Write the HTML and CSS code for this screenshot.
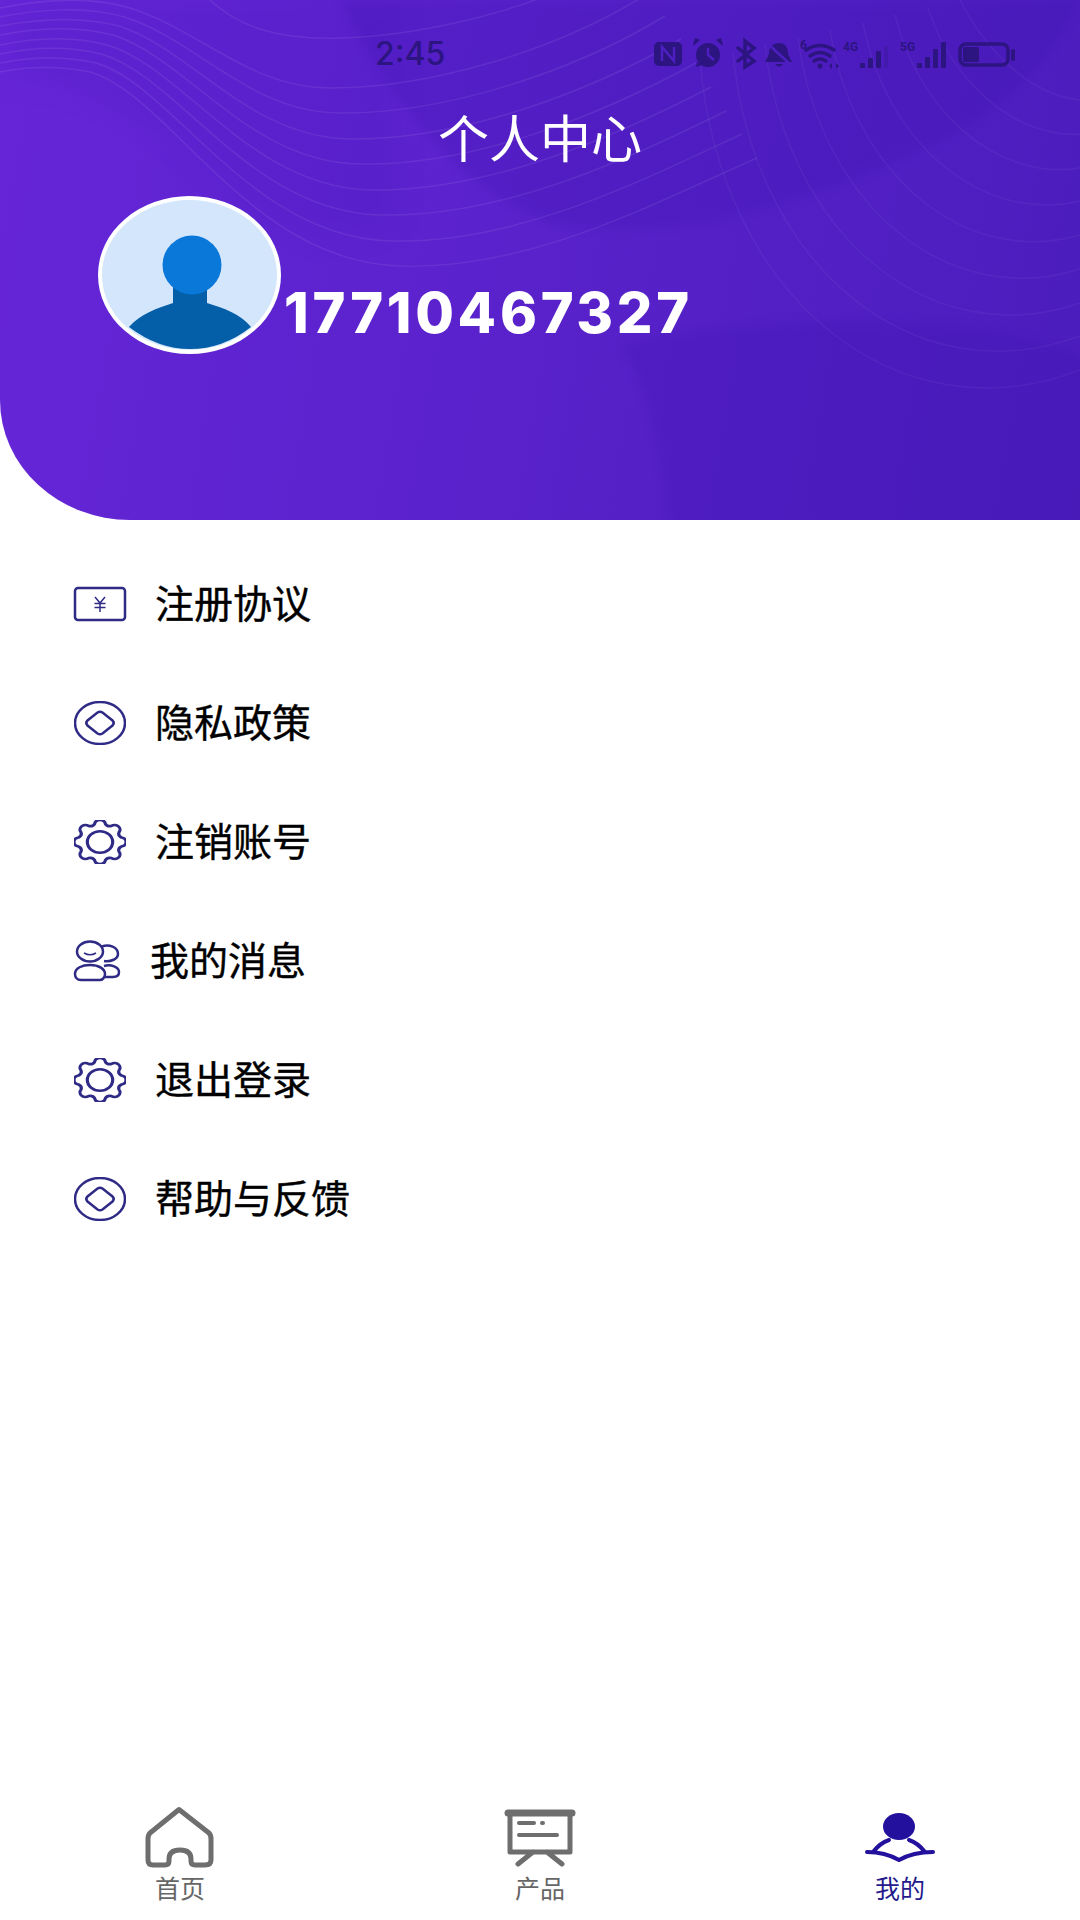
FILE: index.html
```html
<!DOCTYPE html>
<html lang="zh-CN">
<head>
    <meta charset="UTF-8">
    <meta name="viewport" content="width=device-width, initial-scale=1.0">
    <title>个人中心</title>
    <link rel="stylesheet" href="styles.css">
</head>
<body>

<svg class="defs" width="0" height="0" aria-hidden="true">
    <symbol id="icon-gear" viewBox="1.500 1.500 41 41" preserveAspectRatio="none">
        <path d="M17.770 5.020A4.300 4.300 0 0 1 26.230 5.020A4 4 0 0 0 31.010 7A4.300 4.300 0 0 1 37 12.990A4 4 0 0 0 38.980 17.770A4.300 4.300 0 0 1 38.980 26.230A4 4 0 0 0 37 31.010A4.300 4.300 0 0 1 31.010 37A4 4 0 0 0 26.230 38.980A4.300 4.300 0 0 1 17.770 38.980A4 4 0 0 0 12.990 37A4.300 4.300 0 0 1 7 31.010A4 4 0 0 0 5.020 26.230A4.300 4.300 0 0 1 5.020 17.770A4 4 0 0 0 7 12.990A4.300 4.300 0 0 1 12.990 7A4 4 0 0 0 17.770 5.020Z"/>
        <circle cx="22" cy="22" r="10"/>
    </symbol>
    <symbol id="icon-coin" viewBox="0 0 52 44">
        <ellipse cx="26" cy="22" rx="25" ry="21"/>
        <path d="M23.500 11.500Q26 10 28.500 11.500L38.500 19.500Q41 22 38.500 24.500L28.500 32.500Q26 34 23.500 32.500L13.500 24.500Q11 22 13.500 19.500Z"/>
    </symbol>
</svg>

<div class="page">
    <header class="profile-head">
        <svg class="head-bg" viewBox="0 0 1080 520" preserveAspectRatio="none" aria-hidden="true">
            <path class="shade shade-soft" d="M0 0V75C90 85 170 120 250 210C320 250 360 240 400 220V0Z"/>
            <path class="shade" d="M340 0C380 80 450 190 560 225C680 245 830 200 960 130C1030 90 1060 40 1080 0Z"/>
            <path class="shade" d="M668 530C665 440 640 370 620 345C720 320 960 300 1090 360V530Z"/>
            <g class="contour">
                <path d="M210 0C240 28 280 40 340 38C420 36 510 12 560 -10"/>
                <path d="M0 8C40 0 90 -4 130 8C200 30 250 88 330 88C430 88 560 50 650 -8"/>
                <path d="M0 17C39 9 86 6 124 17C196 39 250 113 340 113C444 114 573 72 665 16"/>
                <path d="M0 26C37 19 81 16 119 26C191 49 250 138 350 139C459 140 586 94 681 39"/>
                <path d="M0 35C36 28 77 26 113 35C187 58 250 163 360 164C473 166 599 116 696 63"/>
                <path d="M0 45C34 38 73 36 107 45C183 67 250 187 370 190C487 192 611 139 711 87"/>
                <path d="M0 54C33 47 69 46 101 54C179 76 250 212 380 215C501 218 624 161 726 111"/>
                <path d="M0 63C31 57 64 56 96 63C174 86 250 237 390 241C516 244 637 183 742 134"/>
                <path d="M0 72C30 66 60 66 90 72C170 95 250 262 400 266C530 270 650 205 757 158"/>
            </g>
            <g class="contour contour-faint">
                <path d="M960 0C985 50 1030 95 1080 100"/>
                <path d="M928 8C952 81 1014 138 1080 134"/>
                <path d="M895 15C919 113 998 181 1080 168"/>
                <path d="M863 23C886 144 983 224 1080 201"/>
                <path d="M830 30C853 175 965 268 1080 235"/>
                <path d="M798 38C820 206 949 311 1080 269"/>
                <path d="M765 45C787 238 933 354 1080 303"/>
                <path d="M733 53C754 269 916 397 1080 336"/>
                <path d="M700 60C720 300 900 440 1080 370"/>
            </g>
        </svg>

        <div class="status-bar">
            <span class="status-time">2:45</span>
            <svg class="status-icons" width="362" height="36" viewBox="0 0 362 36" aria-hidden="true">
                <!-- nfc -->
                <rect x="0" y="6" width="28" height="24" rx="5"/>
                <path class="cut" d="M8 25V11L20 25V11"/>
                <!-- alarm -->
                <circle cx="54" cy="19" r="12"/>
                <path d="M39 10L46 4L41 2ZM69 10L62 4L67 2ZM43 26L42 31L48 29Z"/>
                <path class="cut" d="M54 12V19L60 24"/>
                <!-- bluetooth -->
                <path class="line" d="M84 12L100 25L91 31V5L100 12L84 25"/>
                <!-- bell -->
                <path d="M125 7C132 7 134 12 134 18L138 26H111L115 18C115 12 118 7 125 7ZM121 28H129Q125 33 121 28Z"/>
                <path class="cut" d="M112 6L139 31"/>
                <!-- wifi -->
                <path class="line" d="M152 14Q166 5 180 14M156 20Q166 13 176 20M160 25Q166 21 172 25"/>
                <circle cx="166" cy="30" r="2.500"/>
                <text class="net" x="146" y="13">6</text>
                <path d="M175 30L178 27V33ZM182 27L185 30L182 33Z"/>
                <!-- 4g -->
                <text class="net" x="189" y="15">4G</text>
                <rect x="206" y="27" width="5" height="5" rx="1"/>
                <rect x="214" y="22" width="5" height="10" rx="1"/>
                <rect x="222" y="15" width="5" height="17" rx="1"/>
                <rect class="dim" x="230" y="10" width="4" height="22" rx="1"/>
                <!-- 5g -->
                <text class="net" x="246" y="15">5G</text>
                <rect x="263" y="27" width="5" height="5" rx="1"/>
                <rect x="271" y="21" width="5" height="11" rx="1"/>
                <rect x="279" y="13" width="5" height="19" rx="1"/>
                <rect x="287" y="6" width="5" height="26" rx="1"/>
                <!-- battery -->
                <rect class="line" x="306" y="8" width="48" height="21" rx="6"/>
                <rect x="309" y="11" width="16" height="15" rx="2"/>
                <rect x="357" y="13" width="4" height="12" rx="2"/>
            </svg>
        </div>

        <h1 class="head-title">个人中心</h1>

        <div class="user-row">
            <div class="avatar">
                <svg width="175" height="150" viewBox="4 4 175 150" aria-hidden="true">
                    <path class="avatar-body" d="M31 131C42 118 60 112 75 107V80H109V107C125 112 143 118 153 131Q125 153 92 153Q60 153 31 131Z"/>
                    <circle class="avatar-face" cx="94" cy="69" r="29.500"/>
                </svg>
            </div>
            <span class="user-phone">17710467327</span>
        </div>
    </header>

    <ul class="menu">
        <li class="menu-item">
            <svg class="menu-icon" viewBox="0 0 52 34" height="34" aria-hidden="true">
                <rect x="1" y="1" width="50" height="32" rx="3"/>
                <path class="thin" d="M21 10L26 16L31 10M26 16V25M20.500 16.500H31.500M20.500 20.500H31.500"/>
            </svg>
            <span>注册协议</span>
        </li>
        <li class="menu-item">
            <svg class="menu-icon" viewBox="0 0 52 44" height="44" aria-hidden="true"><use href="#icon-coin"/></svg>
            <span>隐私政策</span>
        </li>
        <li class="menu-item">
            <svg class="menu-icon" height="44" aria-hidden="true"><use href="#icon-gear" width="52" height="44"/></svg>
            <span>注销账号</span>
        </li>
        <li class="menu-item menu-item-tight">
            <svg class="menu-icon menu-icon-users" viewBox="0 0 46 40" height="40" aria-hidden="true">
                <ellipse cx="16" cy="10.500" rx="13" ry="10"/>
                <path d="M28 5.500C35 3 44 6 44 13C44 18 37 21 30 20"/>
                <path class="thin" d="M10 12Q16 15.500 22 12"/>
                <path d="M1 33C1 27 8 24 16 24C25 24 31 28 31 33C31 37 28 39 26 39H7C3 39 1 36 1 33Z"/>
                <path d="M30 25C37 23 45 26 45 31C45 34 43 36 39 36H31"/>
            </svg>
            <span>我的消息</span>
        </li>
        <li class="menu-item">
            <svg class="menu-icon" height="44" aria-hidden="true"><use href="#icon-gear" width="52" height="44"/></svg>
            <span>退出登录</span>
        </li>
        <li class="menu-item">
            <svg class="menu-icon" viewBox="0 0 52 44" height="44" aria-hidden="true"><use href="#icon-coin"/></svg>
            <span>帮助与反馈</span>
        </li>
    </ul>

    <nav class="tab-bar">
        <div class="tab">
            <svg class="tab-icon" width="70" height="62" viewBox="0 0 70 62" aria-hidden="true">
                <path class="tab-line" d="M34 3.500L64 27Q66 29 66 33V54Q66 59 60 59H50Q46 59 46 55V53Q46 44 35 44Q24 44 24 53V55Q24 59 20 59H8Q3 59 3 54V33Q3 29 5 27Z"/>
            </svg>
            <span class="tab-label">首页</span>
        </div>
        <div class="tab">
            <svg class="tab-icon" width="70" height="62" viewBox="0 0 70 62" aria-hidden="true">
                <path class="tab-line tab-line-bar" d="M3 7H67"/>
                <path class="tab-line" d="M5 7V46H65V7M28 46L13 58M42 46L57 58"/>
                <path class="tab-line tab-line-thin" d="M14 17H29M37 17H38M14 29H52"/>
            </svg>
            <span class="tab-label">产品</span>
        </div>
        <div class="tab tab-active">
            <svg class="tab-icon" width="70" height="62" viewBox="0 0 70 62" aria-hidden="true">
                <ellipse class="tab-fill" cx="34" cy="20.500" rx="16" ry="13.500"/>
                <path class="tab-line tab-line-thin" d="M24 34Q15 37 8 46M44 34Q53 37 60 46"/>
                <path class="tab-line tab-line-thin" d="M2 46Q20 46 34 54Q48 46 68 46"/>
            </svg>
            <span class="tab-label">我的</span>
        </div>
    </nav>
</div>

</body>
</html>
```

FILE: styles.css
```css
* {
    box-sizing: border-box;
}

body {
    margin: 0;
    background-color: #fff;
    font-family: "Noto Sans CJK SC", "Liberation Sans", sans-serif;
}

.defs {
    position: absolute;
}

.page {
    width: 1080px;
    height: 1920px;
    display: flex;
    flex-direction: column;
    overflow: hidden;
}

/* purple header */
.profile-head {
    position: relative;
    height: 520px;
    flex-shrink: 0;
    background: linear-gradient(100deg, #6626d8 0%, #5a22cc 45%, #4b1dbc 100%);
    border-bottom-left-radius: 130px 120px;
    overflow: hidden;
}

.head-bg {
    position: absolute;
    top: 0;
    left: 0;
    width: 1080px;
    height: 520px;
}

.shade {
    fill: #3810ac;
    opacity: 0.2;
    filter: blur(5px);
}

.shade-soft {
    opacity: 0.12;
    filter: blur(14px);
}

.contour {
    fill: none;
    stroke: #fff;
    stroke-width: 1.500;
    opacity: 0.07;
}

.contour-faint {
    opacity: 0.04;
}

.status-bar {
    position: relative;
    display: flex;
    align-items: center;
    height: 36px;
    margin-top: 36px;
    padding-left: 375px;
}

.status-time {
    width: 279px;
    font-family: "Inter", sans-serif;
    font-size: 32px;
    font-weight: 500;
    line-height: 36px;
    color: #2c1481;
}

.status-icons {
    fill: #2c1481;
    stroke: none;
}

.status-icons .line {
    fill: none;
    stroke: #2c1481;
    stroke-width: 3.500;
    stroke-linecap: round;
}

.status-icons .cut {
    fill: none;
    stroke: #4d1fc0;
    stroke-width: 2.500;
}

.status-icons .dim {
    opacity: 0.25;
}

.status-icons .net {
    font-family: "Roboto", sans-serif;
    font-size: 12px;
    font-weight: 700;
}

.head-title {
    position: relative;
    margin: 34px 0 0;
    text-align: center;
    font-size: 51px;
    font-weight: 400;
    line-height: 60px;
    color: #fff;
}

.user-row {
    position: relative;
    display: flex;
    align-items: flex-start;
    margin-top: 30px;
    padding-left: 98px;
}

.avatar {
    width: 183px;
    height: 158px;
    border: 4px solid #fff;
    border-radius: 50%;
    background-color: #d3e6fb;
    overflow: hidden;
    flex-shrink: 0;
}

.avatar svg {
    display: block;
}

.avatar-face {
    fill: #0a78d8;
}

.avatar-body {
    fill: #045ea8;
}

.user-phone {
    margin: 80px 0 0 3px;
    font-family: "Inter", sans-serif;
    font-size: 56px;
    font-weight: 800;
    line-height: 74px;
    letter-spacing: 3.700px;
    color: #fff;
}

/* menu list */
.menu {
    list-style: none;
    margin: 0;
    padding: 24px 0 0 74px;
    flex: 1;
}

.menu-item {
    display: flex;
    align-items: center;
    gap: 29px;
    height: 119px;
    font-size: 39px;
    font-weight: 400;
    color: #000;
    -webkit-text-stroke: 0.4px #000;
}

.menu-item span {
    padding-bottom: 5px;
}

.menu-item-tight {
    gap: 30px;
}

.menu-icon {
    width: 52px;
    fill: none;
    stroke: #2f2a85;
    stroke-width: 2.500;
    overflow: visible;
}

.menu-icon-users {
    width: 46px;
}

.menu-icon .thin {
    stroke-width: 1.500;
}

/* bottom tabs */
.tab-bar {
    display: flex;
    height: 114px;
    flex-shrink: 0;
}

.tab {
    flex: 1;
    display: flex;
    flex-direction: column;
    align-items: center;
    color: #666;
}

.tab-icon {
    display: block;
    overflow: visible;
}

.tab-line {
    fill: none;
    stroke: #6e6e6e;
    stroke-width: 5;
    stroke-linecap: round;
    stroke-linejoin: round;
}

.tab-line-bar {
    stroke-width: 7;
}

.tab-line-thin {
    stroke-width: 4;
}

.tab-label {
    margin-top: 4px;
    font-size: 25px;
    line-height: 30px;
}

.tab-active {
    color: #241a8c;
}

.tab-active .tab-line {
    stroke: #23109c;
}

.tab-fill {
    fill: #23109c;
}
```
